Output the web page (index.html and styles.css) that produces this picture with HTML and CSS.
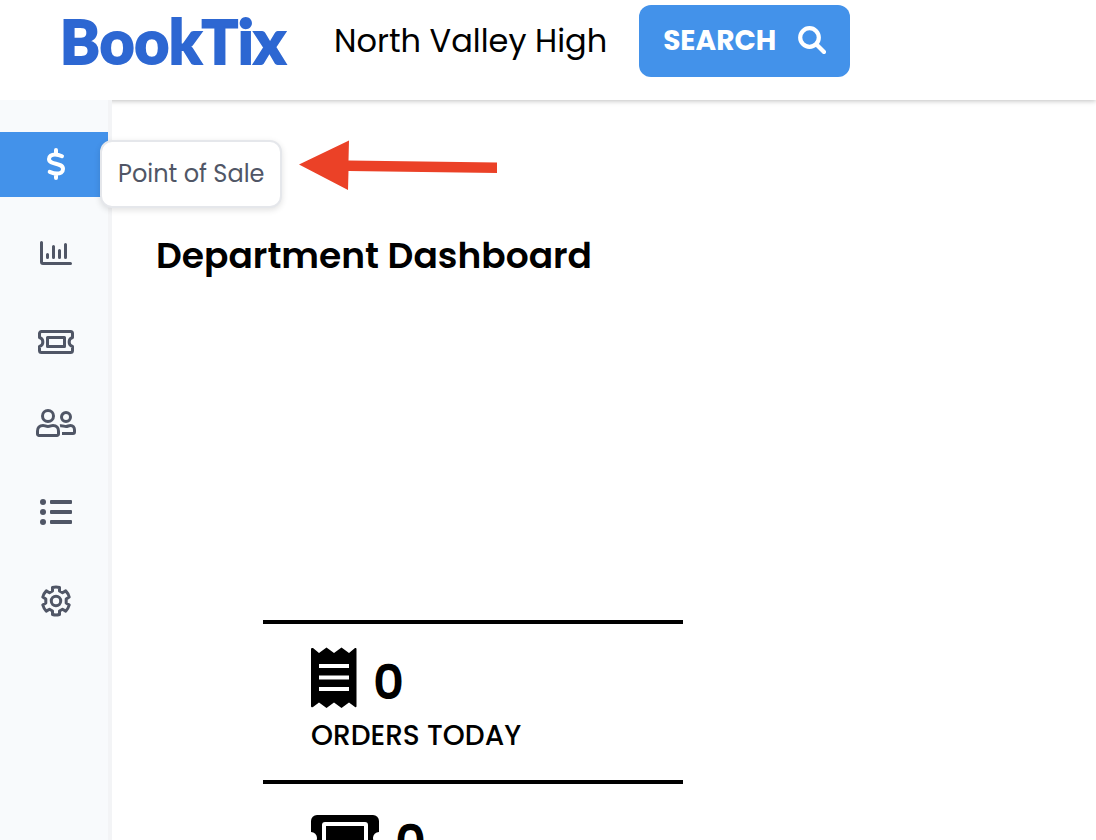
FILE: index.html
```html
<!DOCTYPE html>
<html lang="en">
<head>
<meta charset="utf-8">
<meta name="viewport" content="width=device-width, initial-scale=1">
<title>BookTix - Department Dashboard</title>
<link rel="stylesheet" href="styles.css">
</head>
<body>
<div class="app">
  <header class="header">
    <a class="logo" href="#">BookTix</a>
    <span class="school">North Valley High</span>
    <button class="search" type="button">
      <span>SEARCH</span>
      <svg class="search-icon" viewBox="0 0 28 28" aria-hidden="true"><circle cx="11.5" cy="11.5" r="9.3" fill="none" stroke="currentColor" stroke-width="4.2"/><path d="M18.5 18.5L26 26" fill="none" stroke="currentColor" stroke-width="4.2" stroke-linecap="round"/></svg>
    </button>
  </header>
  <div class="body">
    <nav class="sidebar" aria-label="Main">
      <div class="nav-group">
        <a class="nav-link active" href="#">
          <svg width="20" height="34" viewBox="0 0 20 34" fill="none" stroke="currentColor" stroke-width="4" stroke-linecap="round" stroke-linejoin="round" aria-hidden="true"><path d="M10 3v4M10 27v4M16 9.200C13.500 8 11.500 7.500 9 7.500C5.500 7.500 3 9.200 3 12C3 18.500 17 15 17 22C17 25.200 14.200 26.600 11 26.600C8 26.600 6 25.800 3.700 24.800"/></svg>
          <span class="tooltip">Point of Sale</span>
        </a>
        <a class="nav-link" href="#" aria-label="Reports">
          <svg width="32" height="24" viewBox="0 0 32 24" fill="none" stroke="currentColor" stroke-width="3" stroke-linecap="round" stroke-linejoin="round" aria-hidden="true"><path d="M1.500 1.500V21a1.500 1.500 0 0 0 1.500 1.500H30.500M7.500 13.500v3M13.500 5.500v11M19.500 9.500v7M25.500 3.500v13"/></svg>
        </a>
        <a class="nav-link" href="#" aria-label="Tickets">
          <svg width="36" height="24" viewBox="0 0 36 24" fill="none" stroke="currentColor" stroke-width="3" stroke-linejoin="round" aria-hidden="true"><path d="M3.500 1.500H32.500a2 2 0 0 1 2 2V7.500a4.700 4.700 0 0 0 0 9V20.500a2 2 0 0 1-2 2H3.500a2 2 0 0 1-2-2V16.500a4.700 4.700 0 0 0 0-9V3.500a2 2 0 0 1 2-2z"/><rect x="9.500" y="7.500" width="17" height="9"/></svg>
        </a>
      </div>
      <div class="nav-group">
        <a class="nav-link" href="#" aria-label="People">
          <svg width="40" height="28" viewBox="0 0 40 28" fill="none" stroke="currentColor" stroke-width="3" stroke-linejoin="round" aria-hidden="true"><circle cx="12" cy="7" r="5.500"/><circle cx="30" cy="8" r="4.500"/><path d="M7 16.500C9 16.500 9.500 17.500 12 17.500S15 16.500 17 16.500C20.500 16.500 22.500 19 22.500 22V25a1.500 1.500 0 0 1-1.500 1.500H3A1.500 1.500 0 0 1 1.500 25V22C1.500 19 3.500 16.500 7 16.500zM24 16.700C26.500 16.300 28 17.500 30 17.500S32.500 16.500 34.500 16.500C37 16.500 38.500 18.500 38.500 21V23a1.500 1.500 0 0 1-1.500 1.500H26"/></svg>
        </a>
        <a class="nav-link" href="#" aria-label="Lists">
          <svg width="32" height="26" viewBox="0 0 32 26" fill="currentColor" aria-hidden="true"><circle cx="3" cy="3" r="3"/><circle cx="3" cy="13" r="3"/><circle cx="3" cy="23" r="3"/><rect x="10" y="1" width="22" height="4" rx="1"/><rect x="10" y="11" width="22" height="4" rx="1"/><rect x="10" y="21" width="22" height="4" rx="1"/></svg>
        </a>
        <a class="nav-link" href="#" aria-label="Settings">
          <svg width="32" height="32" viewBox="0 0 32 32" fill="none" stroke="currentColor" stroke-width="3" stroke-linejoin="round" aria-hidden="true"><circle cx="16" cy="16" r="4.700"/><path d="M12.500 2.500Q16 1.500 19.500 2.500V6L22.500 7.700L25.700 5.900Q28.300 8.500 29.200 12L26.200 14V18L29.200 20Q28.300 23.500 25.700 26.100L22.500 24.300L19.500 26V29.500Q16 30.500 12.500 29.500V26L9.500 24.300L6.300 26.100Q3.700 23.500 2.800 20L5.800 18V14L2.800 12Q3.700 8.500 6.300 5.900L9.500 7.700L12.500 6z"/></svg>
        </a>
      </div>
    </nav>
    <main class="main">
      <svg class="arrow" viewBox="0 0 198 50" aria-hidden="true"><path d="M0 24.500L50 .500L49.500 20.500L198 22.500V33L49.500 31L49 50z" fill="#eb4127"/></svg>
      <h1 class="title">Department Dashboard</h1>
      <div class="stats">
        <section class="stat">
          <div class="stat-top">
            <svg width="46" height="62" viewBox="0 0 46 62" aria-hidden="true"><path d="M2 1L8 6L15.500.500L23 6L30.500.500L38 6L44 1Q45.500.500 45.500 2V59Q45.500 61 44 60L38 55.500L30.500 61L23 55.500L15.500 61L8 55.500L2 60Q0 61 0 59V2Q0 .500 2 1z"/><path d="M8 19H38M8 30.500H38M8 42H38" stroke="#fff" stroke-width="4"/></svg>
            <span class="stat-value">0</span>
          </div>
          <div class="stat-label">ORDERS TODAY</div>
        </section>
        <section class="stat">
          <div class="stat-top">
            <svg class="ticket" width="68" height="46" viewBox="0 0 68 46" aria-hidden="true"><path d="M6 0H62a6 6 0 0 1 6 6V17a6 6 0 0 0 0 12V40a6 6 0 0 1-6 6H6a6 6 0 0 1-6-6V29a6 6 0 0 0 0-12V6a6 6 0 0 1 6-6z"/><rect x="13" y="9" width="42" height="28" rx="1" fill="none" stroke="#fff" stroke-width="4"/></svg>
            <span class="stat-value">0</span>
          </div>
        </section>
      </div>
    </main>
  </div>
</div>
</body>
</html>
```
FILE: styles.css
```css
* { box-sizing: border-box; }

body {
  margin: 0;
  font-family: Poppins, Inter, sans-serif;
  color: #000;
  background: #fff;
}

.app {
  display: flex;
  flex-direction: column;
  height: 100vh;
  overflow: hidden;
}

.header {
  display: flex;
  flex: none;
  align-items: center;
  min-height: 100px;
  padding: 0 60px 18px;
  background: #fff;
  box-shadow: 0 1px 5px rgba(0, 0, 0, 0.25);
  position: relative;
  z-index: 1;
}

.logo {
  flex: none;
  width: 274px;
  font-family: Lato, sans-serif;
  font-size: 60px;
  font-weight: 900;
  font-kerning: none;
  line-height: 72px;
  color: #2d67d2;
  -webkit-text-stroke: 2px #2d67d2;
  text-decoration: none;
}

.school {
  margin-right: 32px;
  font-size: 32px;
  line-height: 40px;
}

.search {
  display: flex;
  align-items: center;
  gap: 22px;
  height: 72px;
  padding: 0 24px;
  border: 0;
  border-radius: 12px;
  background: #4392ea;
  color: #fff;
  font: inherit;
  font-size: 28px;
  font-weight: 700;
}

.search-icon {
  width: 28px;
  height: 28px;
  margin-bottom: 2px;
}

.body {
  display: flex;
  flex: 1;
  min-height: 0;
}

.sidebar {
  display: flex;
  flex: none;
  flex-direction: column;
  gap: 16px;
  width: 112px;
  padding-top: 32px;
  border-right: 4px solid #f3f4f6;
  background: #f8fafc;
  position: relative;
  z-index: 2;
}

.nav-group {
  display: flex;
  flex-direction: column;
  gap: 24px;
}

.nav-link {
  display: flex;
  align-items: center;
  justify-content: center;
  height: 65px;
  padding: 0 0 2px 4px;
  color: #505666;
  position: relative;
}

.nav-link.active {
  background: #4392ea;
  color: #fff;
}

.tooltip {
  position: absolute;
  top: 8px;
  left: 100px;
  padding: 16px;
  border: 2px solid #e5e7eb;
  border-radius: 12px;
  background: #fff;
  box-shadow: 0 2px 6px rgba(0, 0, 0, 0.12);
  color: #505666;
  font-size: 24px;
  line-height: 32px;
  white-space: nowrap;
}

.main {
  flex: 1;
  min-width: 0;
  padding: 128px 44px 0;
  overflow: hidden;
  position: relative;
}

.arrow {
  position: absolute;
  top: 40px;
  left: 187px;
  width: 198px;
  height: 50px;
}

.title {
  margin: 0 0 336px;
  font-size: 36px;
  font-weight: 600;
  line-height: 56px;
}

.stats {
  max-width: 420px;
  margin-left: 107px;
}

.stat {
  min-height: 160px;
  padding: 23px 48px 0;
  border-top: 4px solid #000;
}

.stat-top {
  display: flex;
  align-items: flex-start;
  gap: 16px;
  height: 68px;
}

.ticket { margin-top: 8px; }

.stat-value {
  padding-top: 6px;
  font-size: 48px;
  font-weight: 600;
  line-height: 60px;
}

.stat-label {
  font-size: 28px;
  font-weight: 500;
  line-height: 42px;
}
```
